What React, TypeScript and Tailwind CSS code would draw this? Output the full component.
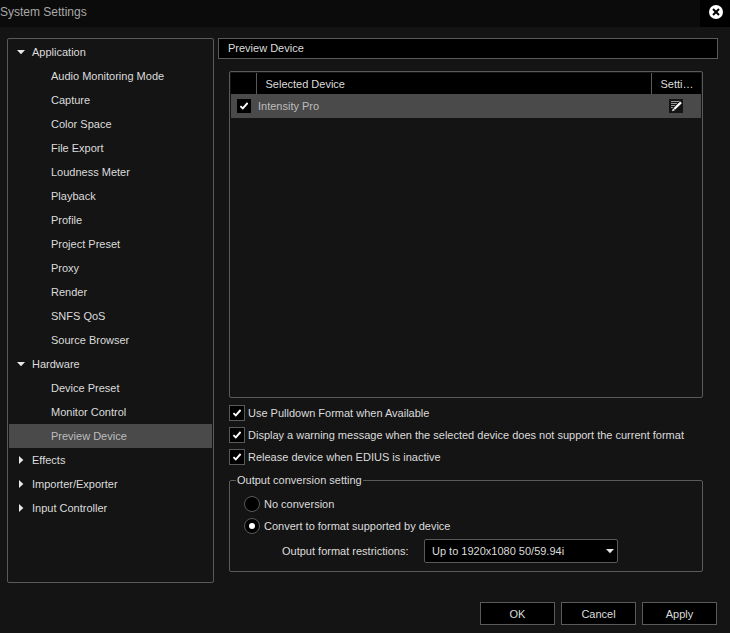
import React, { useState } from 'react';

const tree = [
  {
    name: 'Application',
    children: [
      'Audio Monitoring Mode',
      'Capture',
      'Color Space',
      'File Export',
      'Loudness Meter',
      'Playback',
      'Profile',
      'Project Preset',
      'Proxy',
      'Render',
      'SNFS QoS',
      'Source Browser',
    ],
  },
  { name: 'Hardware', children: ['Device Preset', 'Monitor Control', 'Preview Device'] },
  { name: 'Effects', children: [] },
  { name: 'Importer/Exporter', children: [] },
  { name: 'Input Controller', children: [] },
];

function CheckBox({ id, label, bordered = true }: { id: string; label?: string; bordered?: boolean }) {
  return (
    <span className="grid shrink-0 place-items-center">
      <input
        id={id}
        type="checkbox"
        defaultChecked
        aria-label={label}
        className={
          bordered
            ? 'peer col-start-1 row-start-1 size-4 appearance-none border border-[#5a5a5a] bg-black'
            : 'peer col-start-1 row-start-1 size-[14px] appearance-none bg-black'
        }
      />
      <svg viewBox="0 0 8 8" className="pointer-events-none invisible col-start-1 row-start-1 size-2 peer-checked:visible">
        <path d="M0.4 4.1 L2.8 6.4 L7.6 1" fill="none" stroke="#fff" strokeWidth="1.9" />
      </svg>
    </span>
  );
}

function CheckRow({ id, text }: { id: string; text: string }) {
  return (
    <div className="flex items-center gap-[3px]">
      <CheckBox id={id} />
      <label htmlFor={id}>{text}</label>
    </div>
  );
}

function RadioRow({ id, text, checked, onSelect }: { id: string; text: string; checked: boolean; onSelect: () => void }) {
  return (
    <div className="flex items-center gap-1">
      <span className="grid shrink-0 place-items-center">
        <input
          id={id}
          type="radio"
          name="conversion"
          checked={checked}
          onChange={onSelect}
          className="peer col-start-1 row-start-1 size-4 appearance-none rounded-full border border-[#5a5a5a] bg-black"
        />
        <span className="pointer-events-none invisible col-start-1 row-start-1 size-[6px] rounded-full bg-white peer-checked:visible" />
      </span>
      <label htmlFor={id}>{text}</label>
    </div>
  );
}

function Arrow({ open }: { open: boolean }) {
  return (
    <svg viewBox="0 0 8 8" className="size-2 shrink-0" fill="#e8e8e8">
      {open ? <path d="M0 2 H8 L4 6.3 Z" /> : <path d="M2 0 V8 L6.3 4 Z" />}
    </svg>
  );
}

function SettingsTree() {
  const [opened, setOpened] = useState<string[]>(['Application', 'Hardware']);
  const [selected, setSelected] = useState('Preview Device');

  const toggle = (name: string) => {
    setOpened(opened.includes(name) ? opened.filter((n) => n !== name) : [...opened, name]);
  };

  return (
    <nav className="w-[207px] shrink-0 rounded-xs border border-[#5a5a5a] p-px">
      <ul>
        {tree.map((group) => (
          <li key={group.name}>
            <button type="button" onClick={() => toggle(group.name)} className="flex h-6 w-full items-center gap-[7px] pl-2">
              <Arrow open={opened.includes(group.name)} />
              {group.name}
            </button>
            {opened.includes(group.name) && (
              <ul>
                {group.children.map((item) => (
                  <li key={item}>
                    <button
                      type="button"
                      onClick={() => setSelected(item)}
                      className={
                        item === selected
                          ? 'flex h-6 w-full items-center bg-[#4a4a4a] pl-[42px] text-[#bdbdbd]'
                          : 'flex h-6 w-full items-center pl-[42px]'
                      }
                    >
                      {item}
                    </button>
                  </li>
                ))}
              </ul>
            )}
          </li>
        ))}
      </ul>
    </nav>
  );
}

function DeviceTable() {
  return (
    <div className="flex-1 rounded-xs border border-[#5a5a5a] p-px">
      <table className="w-full table-fixed border-collapse text-left">
        <thead className="bg-black">
          <tr className="h-[21px]">
            <th className="w-[25px] border-r border-[#5a5a5a]" />
            <th className="border-r border-[#5a5a5a] pl-[9px] font-normal">Selected Device</th>
            <th className="w-[50px] pl-[9px] font-normal">Setti…</th>
          </tr>
        </thead>
        <tbody>
          <tr className="h-6 bg-[#4a4a4a] text-[#bdbdbd]">
            <td className="pl-[6px]">
              <div className="flex">
                <CheckBox id="device" label="Use Intensity Pro" bordered={false} />
              </div>
            </td>
            <td className="pl-[2px]">Intensity Pro</td>
            <td>
              <button type="button" aria-label="Device settings" className="mx-auto block size-[14px] bg-[#141414]">
                <svg viewBox="0 0 14 14" className="size-[14px]" fill="none">
                  <path d="M2 2.5H11M2 4.5H9.5M2 6.5H7.5M2 8.5H5" stroke="#999" strokeWidth="1" />
                  <path d="M4.8 10.4L11.8 3.6" stroke="#141414" strokeWidth="4" />
                  <path d="M5.2 10L12 3.4" stroke="#fff" strokeWidth="2.2" />
                  <path d="M3 12.2L4 9.4L5.8 11.2Z" fill="#fff" />
                </svg>
              </button>
            </td>
          </tr>
        </tbody>
      </table>
    </div>
  );
}

function OutputConversion() {
  const [mode, setMode] = useState('convert');
  return (
    <fieldset className="mt-[7px] rounded-xs border border-[#5a5a5a] pr-3 pb-2 pl-[14px]">
      <legend className="-ml-2 px-px leading-4">Output conversion setting</legend>
      <div className="flex flex-col gap-[6px] pt-2">
        <RadioRow id="none" text="No conversion" checked={mode === 'none'} onSelect={() => setMode('none')} />
        <RadioRow
          id="convert"
          text="Convert to format supported by device"
          checked={mode === 'convert'}
          onSelect={() => setMode('convert')}
        />
      </div>
      <div className="mt-[5px] flex items-center pl-[38px]">
        <label htmlFor="restrictions" className="w-[142px]">
          Output format restrictions:
        </label>
        <span className="grid w-[194px] items-center">
          <select
            id="restrictions"
            className="col-start-1 row-start-1 h-6 w-full appearance-none rounded-xs border border-[#5a5a5a] bg-black pr-5 pl-[7px]"
          >
            <option>Up to 1920x1080 50/59.94i</option>
          </select>
          <span className="pointer-events-none col-start-1 row-start-1 mr-1 justify-self-end">
            <Arrow open />
          </span>
        </span>
      </div>
    </fieldset>
  );
}

export default function App() {
  return (
    <div className="flex min-h-screen flex-col bg-[#141414] font-['Liberation_Sans',sans-serif] text-[11px] leading-4 text-[#dcdcdc]">
      <header className="flex h-[27px] items-center justify-between bg-[#0b0b0b]">
        <h1 className="pb-1 text-xs leading-4 text-[#a8a8a8]">System Settings</h1>
        <button type="button" aria-label="Close" className="flex h-full w-[30px] items-center justify-center bg-black pb-1 pl-[2px]">
          <svg viewBox="0 0 14 14" className="size-[14px]">
            <circle cx="7" cy="7" r="7" fill="#fff" />
            <path d="M4 4L10 10M10 4L4 10" stroke="#000" strokeWidth="2" />
          </svg>
        </button>
      </header>

      <main className="flex flex-1 gap-1 pt-[11px] pr-3 pl-[7px]">
        <SettingsTree />
        <section className="flex min-w-0 flex-1 flex-col">
          <h2 className="border border-[#5a5a5a] bg-black pl-[9px] leading-[19px]">Preview Device</h2>
          <div className="flex flex-1 flex-col pt-3 pr-[15px] pb-[11px] pl-[11px]">
            <DeviceTable />
            <div className="flex flex-col gap-[6px] pt-[7px]">
              <CheckRow id="pulldown" text="Use Pulldown Format when Available" />
              <CheckRow id="warning" text="Display a warning message when the selected device does not support the current format" />
              <CheckRow id="release" text="Release device when EDIUS is inactive" />
            </div>
            <OutputConversion />
          </div>
        </section>
      </main>

      <footer className="flex justify-end gap-[6px] pt-[19px] pr-[13px] pb-2">
        {['OK', 'Cancel', 'Apply'].map((name) => (
          <button key={name} type="button" className="h-[23px] w-[75px] border border-[#5a5a5a] bg-black">
            {name}
          </button>
        ))}
      </footer>
    </div>
  );
}
